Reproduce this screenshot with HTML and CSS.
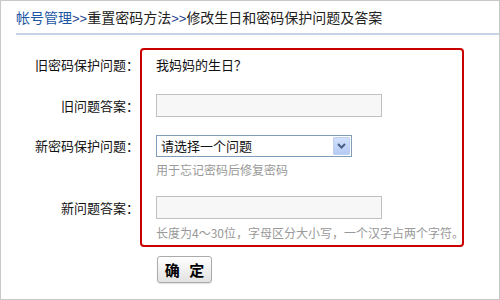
FILE: index.html
```html
<!doctype html>
<html lang="zh-CN">
<head>
	<meta charset="UTF-8">
	<title>修改生日和密码保护问题及答案</title>
	<link rel="stylesheet" href="styles.css">
</head>
<body>
	<div class="page">
		<div class="crumb">
			<a href="#">帐号管理</a><span class="sep">&gt;&gt;</span>重置密码方法<span class="sep">&gt;&gt;</span>修改生日和密码保护问题及答案
		</div>
		<form class="form" action="#">
			<div class="frame"></div>

			<div class="lbl r1">旧密码保护问题：</div>
			<div class="fld r1"><span class="old-q">我妈妈的生日？</span></div>

			<div class="lbl r2">旧问题答案：</div>
			<div class="fld r2"><input type="text" class="txt"></div>

			<div class="lbl r3">新密码保护问题：</div>
			<div class="fld r3">
				<div class="select">
					<select>
						<option>请选择一个问题</option>
					</select>
					<span class="arrow">
						<svg width="9" height="6" viewBox="0 0 9 6"><path d="M1 1 L4.5 4.5 L8 1" fill="none" stroke="#4a5f86" stroke-width="2"/></svg>
					</span>
				</div>
				<div class="hint">用于忘记密码后修复密码</div>
			</div>

			<div class="lbl r4">新问题答案：</div>
			<div class="fld r4">
				<input type="text" class="txt">
				<div class="hint h2">长度为4～30位，字母区分大小写，一个汉字占两个字符。</div>
			</div>
		</form>
		<button class="btn" type="button">确 定</button>
	</div>
</body>
</html>
```

FILE: styles.css
```css
body{ margin: 0; font-family: "Noto Sans CJK SC", "Noto Sans", sans-serif; color: #222;}
.page{ width: 500px; height: 300px; box-sizing: border-box; border: 1px solid #c8c8c8; background: #fff;}
.crumb{ margin-left: 15px; padding-top: 7px; height: 18px; line-height: 18px; padding-bottom: 7px; font-size: 14px; border-bottom: 2px solid #c6d4e6; color: #222;}
.crumb a{ color: #1b55a3; text-decoration: none;}
.crumb .sep{ color: #23428c; font-family: "Liberation Sans", sans-serif; font-size: 13px;}

.form{ display: grid; grid-template-columns: 139px 324px; margin-top: 13px;}
.frame{ grid-column: 2; grid-row: 1 / 5; border: 2px solid #c80000; border-radius: 4px;}
.lbl{ grid-column: 1; text-align: right; font-size: 13px; padding-right: 1px; color: #111;}
.fld{ grid-column: 2; padding-left: 16px; font-size: 13px; color: #111;}
.r1{ grid-row: 1; padding-top: 7px; line-height: 20px;}
.r2{ grid-row: 2; padding-top: 19px; line-height: 23px;}
.r3{ grid-row: 3; padding-top: 18px; line-height: 22px;}
.r4{ grid-row: 4; padding-top: 18px; line-height: 23px; padding-bottom: 6px;}
.fld.r3, .fld.r4{ line-height: normal;}

.txt{ display: block; width: 226px; height: 23px; box-sizing: border-box; margin: 0; border: 1px solid #c0c0c0; background: #f7f7f7;}

.select{ display: flex; width: 196px; height: 22px; box-sizing: border-box; border: 1px solid #7f9db9; background: #fff;}
.select select{ flex: 1; appearance: none; -webkit-appearance: none; border: none; outline: none; background: transparent; font-family: inherit; font-size: 13px; color: #111; padding: 0 0 0 4px; margin: 0; height: 20px; line-height: 20px;}
.arrow{ width: 15px; height: 16px; margin: 1px; border: 1px solid #bccff3; border-radius: 1px; background: linear-gradient(#d2e1fc, #b5cbf4); display: flex; align-items: center; justify-content: center;}
.arrow svg{ display: block;}

.hint{ margin-top: 5px; height: 16px; line-height: 16px; font-size: 12px; color: #999;}
.hint.h2{ margin-top: 6px;}

.btn{ display: block; margin: 9px 0 0 156px; width: 55px; height: 27px; border: 1px solid #ababab; border-radius: 3px; background: linear-gradient(#ffffff, #e2e2e2); box-shadow: 0 1px 1px rgba(0,0,0,0.12); font-family: inherit; font-size: 15px; font-weight: bold; color: #000; padding: 0; word-spacing: 6px; cursor: pointer;}
```
